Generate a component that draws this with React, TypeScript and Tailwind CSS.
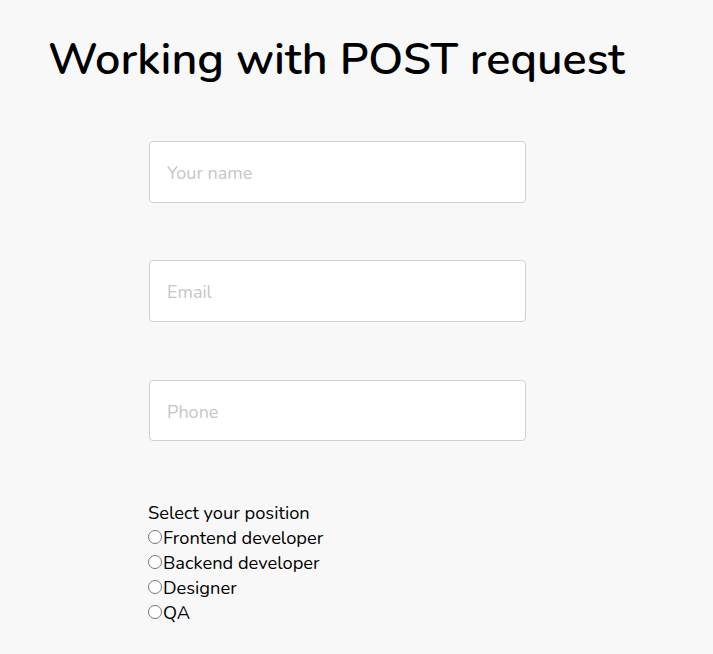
import { useState } from 'react';

const positions = ['Frontend developer', 'Backend developer', 'Designer', 'QA'];

export default function App() {
  const [pos, setPos] = useState('');

  return (
    <div className="min-h-[654px] bg-[#f8f8f8] text-black font-['Nunito','Lato','Noto_Sans',sans-serif]">
      <div className="pl-[48px] pt-[30px]">
        <h1 className="text-[45px] leading-[60px] font-semibold">Working with POST request</h1>
      </div>

      <form className="pl-[149px] pt-[51px] flex flex-col">
        <div className="flex flex-col gap-[57px]">
          <input
            type="text"
            placeholder="Your name"
            className="w-[377px] h-[62px] bg-white border border-[#d0d0d0] rounded-[4px] px-[17px] pt-[2px] text-[18px] placeholder:text-[#c6c6c6] outline-none"
          />
          <input
            type="email"
            placeholder="Email"
            className="w-[377px] h-[62px] bg-white border border-[#d0d0d0] rounded-[4px] px-[17px] pt-[2px] text-[18px] placeholder:text-[#c6c6c6] outline-none"
          />
          <input
            type="tel"
            placeholder="Phone"
            className="w-[377px] h-[61px] mt-[1px] bg-white border border-[#d0d0d0] rounded-[4px] px-[17px] pt-[2px] text-[18px] placeholder:text-[#c6c6c6] outline-none"
          />
        </div>

        <div className="-ml-[1px] mt-[60px] text-[18.3px] leading-[25px]">
          <p>Select your position</p>
          {positions.map((p) => (
            <label key={p} className="flex items-center">
              <input
                type="radio"
                name="position"
                checked={pos === p}
                onChange={() => setPos(p)}
                className="w-[14px] h-[14px] m-0 mr-[1px] -mt-[3px]"
              />
              <span>{p}</span>
            </label>
          ))}
        </div>
      </form>
    </div>
  );
}
